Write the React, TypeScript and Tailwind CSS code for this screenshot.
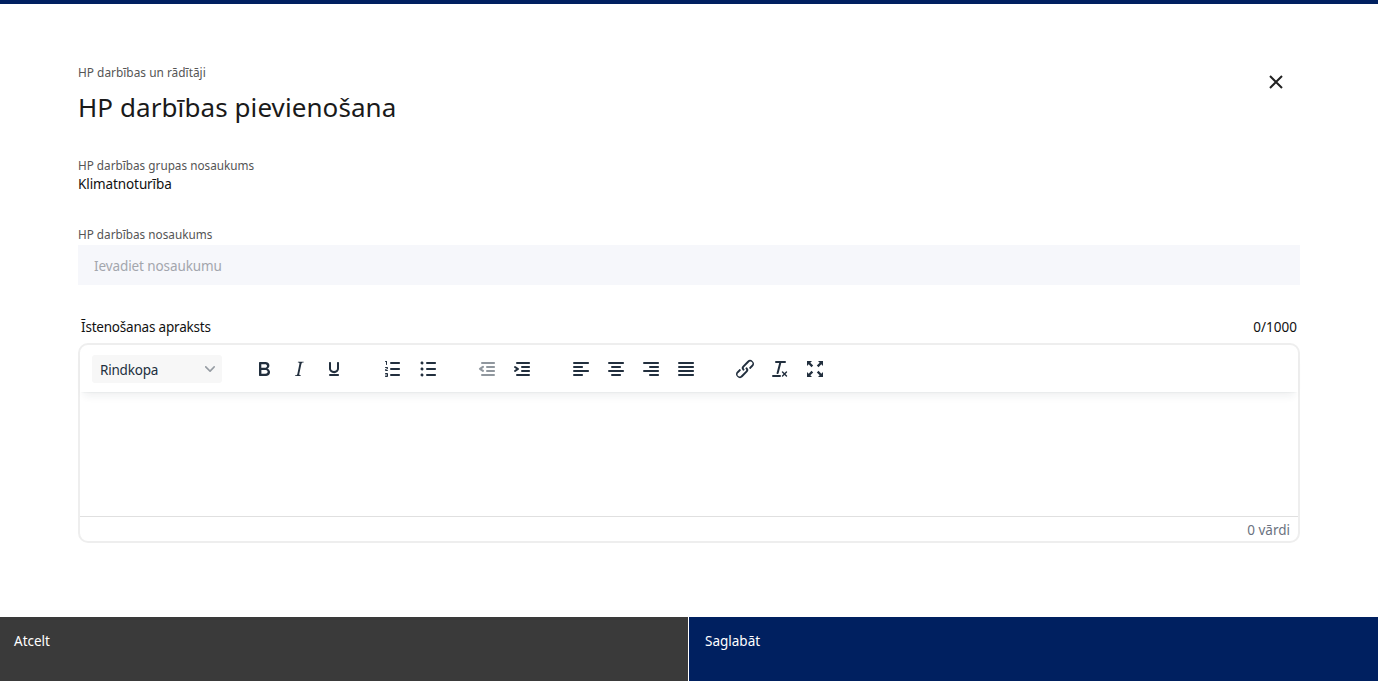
const P: Record<string, string> = {
  bold: "M7.8 19c-.3 0-.5 0-.6-.2l-.2-.5V5.7c0-.2 0-.4.2-.5l.6-.2h5c1.5 0 2.7.3 3.5 1 .7.6 1.1 1.4 1.1 2.5a3 3 0 0 1-.6 1.9c-.4.6-1 1-1.6 1.2.4.1.9.3 1.3.6s.8.7 1 1.2c.4.4.5 1 .5 1.6 0 1.3-.4 2.3-1.3 3-.8.7-2 1-3.7 1H7.8zm5-8.3c.6 0 1.2-.1 1.6-.5.4-.3.6-.7.6-1.3 0-1.1-.8-1.7-2.3-1.7H9.3v3.5h3.4zm.5 6c.7 0 1.3-.1 1.7-.4.4-.4.6-.9.6-1.5s-.2-1-.7-1.4c-.4-.3-1-.4-2-.4H9.4v3.8h4z",
  italic: "M16.7 4.7l-.1.9h-.3c-.6 0-1 0-1.4.3-.3.3-.4.6-.5 1.1l-2.1 9.8v.6c0 .5.4.8 1.4.8h.2l-.2.8H8l.2-.8h.2c1.1 0 1.8-.5 2-1.5l2-9.8.1-.5c0-.6-.4-.8-1.4-.8h-.3l.2-.9h5.8z",
  underline: "M16 5c.6 0 1 .4 1 1v5.5a4 4 0 0 1-.4 1.8l-1 1.4a5.3 5.3 0 0 1-5.5 1 5 5 0 0 1-1.6-1c-.5-.4-.8-.9-1.1-1.4a4 4 0 0 1-.4-1.8V6c0-.6.4-1 1-1s1 .4 1 1v5.5c0 .3 0 .6.2 1l.6.7a3.3 3.3 0 0 0 2.2.8 3.4 3.4 0 0 0 2.2-.8c.3-.2.4-.5.6-.8l.2-.9V6c0-.6.4-1 1-1zM8 17h8c.6 0 1 .4 1 1s-.4 1-1 1H8a1 1 0 0 1 0-2z",
  ol: "M10 17h8c.6 0 1 .4 1 1s-.4 1-1 1h-8a1 1 0 0 1 0-2zm0-6h8c.6 0 1 .4 1 1s-.4 1-1 1h-8a1 1 0 0 1 0-2zm0-6h8c.6 0 1 .4 1 1s-.4 1-1 1h-8a1 1 0 1 1 0-2zM6 4v3.5c0 .3-.2.5-.5.5a.5.5 0 0 1-.5-.5V5h-.5a.5.5 0 0 1 0-1H6zm-1 8.8l.2.2h1.3c.3 0 .5.2.5.5s-.2.5-.5.5H4.9a1 1 0 0 1-.9-1V13c0-.4.3-.8.6-1l1.2-.4.2-.3a.2.2 0 0 0-.2-.2H4.5a.5.5 0 0 1-.5-.5c0-.3.2-.5.5-.5h1.6c.5 0 .9.4.9 1v.1c0 .4-.3.8-.6 1l-1.2.4-.2.3zM7 17v2c0 .6-.4 1-1 1H4.5a.5.5 0 0 1 0-1h1.2c.2 0 .3-.1.3-.3 0-.2-.1-.3-.3-.3H4.4a.4.4 0 1 1 0-.8h1.3c.2 0 .3-.1.3-.3 0-.2-.1-.3-.3-.3H4.5a.5.5 0 1 1 0-1H6c.6 0 1 .4 1 1z",
  ul: "M11 5h8c.6 0 1 .4 1 1s-.4 1-1 1h-8a1 1 0 0 1 0-2zm0 6h8c.6 0 1 .4 1 1s-.4 1-1 1h-8a1 1 0 0 1 0-2zm0 6h8c.6 0 1 .4 1 1s-.4 1-1 1h-8a1 1 0 0 1 0-2zM4.5 6c0-.4.1-.8.4-1 .3-.4.7-.5 1.1-.5s.8.1 1 .4c.4.3.5.7.5 1.1s-.1.8-.4 1c-.3.4-.7.5-1.1.5s-.8-.1-1-.4c-.4-.3-.5-.7-.5-1.1zm0 6c0-.4.1-.8.4-1 .3-.4.7-.5 1.1-.5s.8.1 1 .4c.4.3.5.7.5 1.1s-.1.8-.4 1c-.3.4-.7.5-1.1.5s-.8-.1-1-.4c-.4-.3-.5-.7-.5-1.1zm0 6c0-.4.1-.8.4-1 .3-.4.7-.5 1.1-.5s.8.1 1 .4c.4.3.5.7.5 1.1s-.1.8-.4 1c-.3.4-.7.5-1.1.5s-.8-.1-1-.4c-.4-.3-.5-.7-.5-1.1z",
  outdent: "M7 5h12c.6 0 1 .4 1 1s-.4 1-1 1H7a1 1 0 1 1 0-2zm5 4h7c.6 0 1 .4 1 1s-.4 1-1 1h-7a1 1 0 0 1 0-2zm0 4h7c.6 0 1 .4 1 1s-.4 1-1 1h-7a1 1 0 0 1 0-2zm-5 4h12a1 1 0 0 1 0 2H7a1 1 0 0 1 0-2zm1.6-3.9a1 1 0 0 1-1.2 1.6l-3-2a1 1 0 0 1 0-1.6l3-2a1 1 0 0 1 1.2 1.6L6.8 12l1.8 1.1z",
  indent: "M7 5h12c.6 0 1 .4 1 1s-.4 1-1 1H7a1 1 0 1 1 0-2zm5 4h7c.6 0 1 .4 1 1s-.4 1-1 1h-7a1 1 0 0 1 0-2zm0 4h7c.6 0 1 .4 1 1s-.4 1-1 1h-7a1 1 0 0 1 0-2zm-5 4h12a1 1 0 0 1 0 2H7a1 1 0 0 1 0-2zm-2.6-3.8L6.2 12l-1.8-1.2a1 1 0 0 1 1.2-1.6l3 2a1 1 0 0 1 0 1.6l-3 2a1 1 0 1 1-1.2-1.6z",
  left: "M5 5h14c.6 0 1 .4 1 1s-.4 1-1 1H5a1 1 0 1 1 0-2zm0 4h8c.6 0 1 .4 1 1s-.4 1-1 1H5a1 1 0 1 1 0-2zm0 8h8c.6 0 1 .4 1 1s-.4 1-1 1H5a1 1 0 0 1 0-2zm0-4h14c.6 0 1 .4 1 1s-.4 1-1 1H5a1 1 0 0 1 0-2z",
  center: "M5 5h14c.6 0 1 .4 1 1s-.4 1-1 1H5a1 1 0 1 1 0-2zm3 4h8c.6 0 1 .4 1 1s-.4 1-1 1H8a1 1 0 1 1 0-2zm0 8h8c.6 0 1 .4 1 1s-.4 1-1 1H8a1 1 0 0 1 0-2zm-3-4h14c.6 0 1 .4 1 1s-.4 1-1 1H5a1 1 0 0 1 0-2z",
  right: "M5 5h14c.6 0 1 .4 1 1s-.4 1-1 1H5a1 1 0 1 1 0-2zm6 4h8c.6 0 1 .4 1 1s-.4 1-1 1h-8a1 1 0 0 1 0-2zm0 8h8c.6 0 1 .4 1 1s-.4 1-1 1h-8a1 1 0 0 1 0-2zm-6-4h14c.6 0 1 .4 1 1s-.4 1-1 1H5a1 1 0 0 1 0-2z",
  justify: "M5 5h14c.6 0 1 .4 1 1s-.4 1-1 1H5a1 1 0 1 1 0-2zm0 4h14c.6 0 1 .4 1 1s-.4 1-1 1H5a1 1 0 1 1 0-2zm0 4h14c.6 0 1 .4 1 1s-.4 1-1 1H5a1 1 0 0 1 0-2zm0 4h14c.6 0 1 .4 1 1s-.4 1-1 1H5a1 1 0 0 1 0-2z",
  link: "M6.2 12.3a1 1 0 0 1 1.4 1.4l-2 2a2 2 0 1 0 2.6 2.8l4.8-4.8a1 1 0 0 0 0-1.4 1 1 0 1 1 1.4-1.3 2.9 2.9 0 0 1 0 4L9.6 20a3.9 3.9 0 0 1-5.5-5.5l2-2zm11.6-.6a1 1 0 0 1-1.4-1.4l2-2a2 2 0 1 0-2.6-2.8L11 10.3a1 1 0 0 0 0 1.4A1 1 0 1 1 9.6 13a2.9 2.9 0 0 1 0-4L14.4 4a3.9 3.9 0 0 1 5.5 5.5l-2 2z",
  clear: "M13.2 6a1 1 0 0 1 0 .2l-2.6 10a1 1 0 0 1-1 .8h-.2a.8.8 0 0 1-.8-1l2.6-10H8a1 1 0 1 1 0-2h9a1 1 0 0 1 0 2h-3.8zM5 18h7a1 1 0 0 1 0 2H5a1 1 0 0 1 0-2zm13 1.5L16.5 18 15 19.5a.7.7 0 0 1-1-1l1.5-1.5-1.5-1.5a.7.7 0 0 1 1-1l1.5 1.5 1.5-1.5a.7.7 0 0 1 1 1L17.5 17l1.5 1.5a.7.7 0 0 1-1 1z",
  full: "M15.5 10.2L13.8 8.5 16.7 5.7 15 4H20V9L18.3 7.3zM8.5 10.2L5.7 7.3 4 9V4H9L7.3 5.7 10.2 8.5zM15.5 13.8L18.3 16.7 20 15V20H15L16.7 18.3 13.8 15.5zM8.5 13.8L10.2 15.5 7.3 18.3 9 20H4V15L5.7 16.7z",
};

function Tool({ name, dim }: { name: string; dim?: boolean }) {
  return (
    <button className="flex h-[28px] w-[34px] mr-px items-center justify-center">
      <svg width="24" height="24" viewBox="0 0 24 24" className={dim ? "fill-[#222f3e]/50" : "fill-[#222f3e]"}>
        <path d={P[name]} fillRule="evenodd" />
      </svg>
    </button>
  );
}

function Group({ names, dim }: { names: string[]; dim?: string }) {
  return (
    <div className="flex mr-[24px]">
      {names.map((n) => (
        <Tool key={n} name={n} dim={n === dim} />
      ))}
    </div>
  );
}

export default function App() {
  return (
    <div className="flex h-screen flex-col border-t-4 border-[#002060] bg-white font-['Noto_Sans',sans-serif] text-[#111]">
      <main className="relative flex-1 px-[78px] pt-[59px]">
        <svg width="16" height="16" viewBox="0 0 16 16" className="absolute left-[1268px] top-[70px] stroke-[#222] stroke-2" fill="none">
          <path d="M2 2l12 12M14 2L2 14" />
        </svg>
        <p className="text-[11.9px] leading-[18px] text-[#555]">HP darbības un rādītāji</p>
        <h1 className="mt-[8px] text-[26px] leading-[36px] tracking-[0.08px] text-[#1a1a1a]">HP darbības pievienošana</h1>
        <p className="mt-[31px] text-[11.75px] leading-[18px] text-[#555]">HP darbības grupas nosaukums</p>
        <p className="text-[13.5px] leading-[20px] tracking-[-0.1px] text-[#111]">Klimatnoturība</p>
        <label className="mt-[31px] block text-[11.75px] leading-[18px] text-[#555]">HP darbības nosaukums</label>
        <input readOnly placeholder="Ievadiet nosaukumu" className="mt-[2px] block h-[40px] w-full bg-[#f6f7fb] px-4 pt-[2px] text-[13.5px] tracking-[-0.1px] outline-none placeholder:text-[#a3a6ad]" />
        <div className="mt-[32px] flex items-center justify-between px-[3px] text-[13.5px] leading-[20px]">
          <span className="tracking-[-0.2px]">Īstenošanas apraksts</span>
          <span>0/1000</span>
        </div>
        <div className="mt-[6px] flex h-[200px] flex-col rounded-[10px] border-2 border-[#eeeeee]">
          <div className="flex h-[47px] items-center pl-3 pr-1 pt-px shadow-[0_2px_2px_-2px_rgba(34,47,62,0.1),0_8px_8px_-4px_rgba(34,47,62,0.07)]">
            <div className="mr-[25px] flex h-[28px] w-[130px] items-center justify-between rounded-[3px] bg-[#f7f7f7] pl-2 pr-[7px] text-[13.5px] tracking-[-0.2px] text-[#222f3e]">
              <span className="pt-[2px]">Rindkopa</span>
              <svg width="10" height="10" viewBox="0 0 10 10" fill="#222f3e" opacity="0.45"><path d="M8.7 2.2c.3-.3.8-.3 1 0 .4.4.4.9 0 1.2L5.7 7.8c-.3.3-.9.3-1.2 0L.2 3.4a.8.8 0 0 1 0-1.2c.3-.3.8-.3 1.1 0L5 6l3.7-3.8z" /></svg>
            </div>
            <Group names={["bold", "italic", "underline"]} />
            <Group names={["ol", "ul"]} />
            <Group names={["outdent", "indent"]} dim="outdent" />
            <Group names={["left", "center", "right", "justify"]} />
            <Group names={["link", "clear", "full"]} />
          </div>
          <div className="flex-1" />
          <div className="flex h-[25px] items-center justify-end border-t border-[#e0e0e0] px-2 pt-[2px] text-[13.5px] text-[#6b7280]">0 vārdi</div>
        </div>
      </main>
      <footer className="flex h-16 text-[13.5px] text-white">
        <button className="flex h-full w-[688px] items-start bg-[#3a3a3a] px-[14px] pt-[14px]">Atcelt</button>
        <button className="ml-px flex h-full flex-1 items-start bg-[#002060] px-4 pt-[14px]">Saglabāt</button>
      </footer>
    </div>
  );
}
